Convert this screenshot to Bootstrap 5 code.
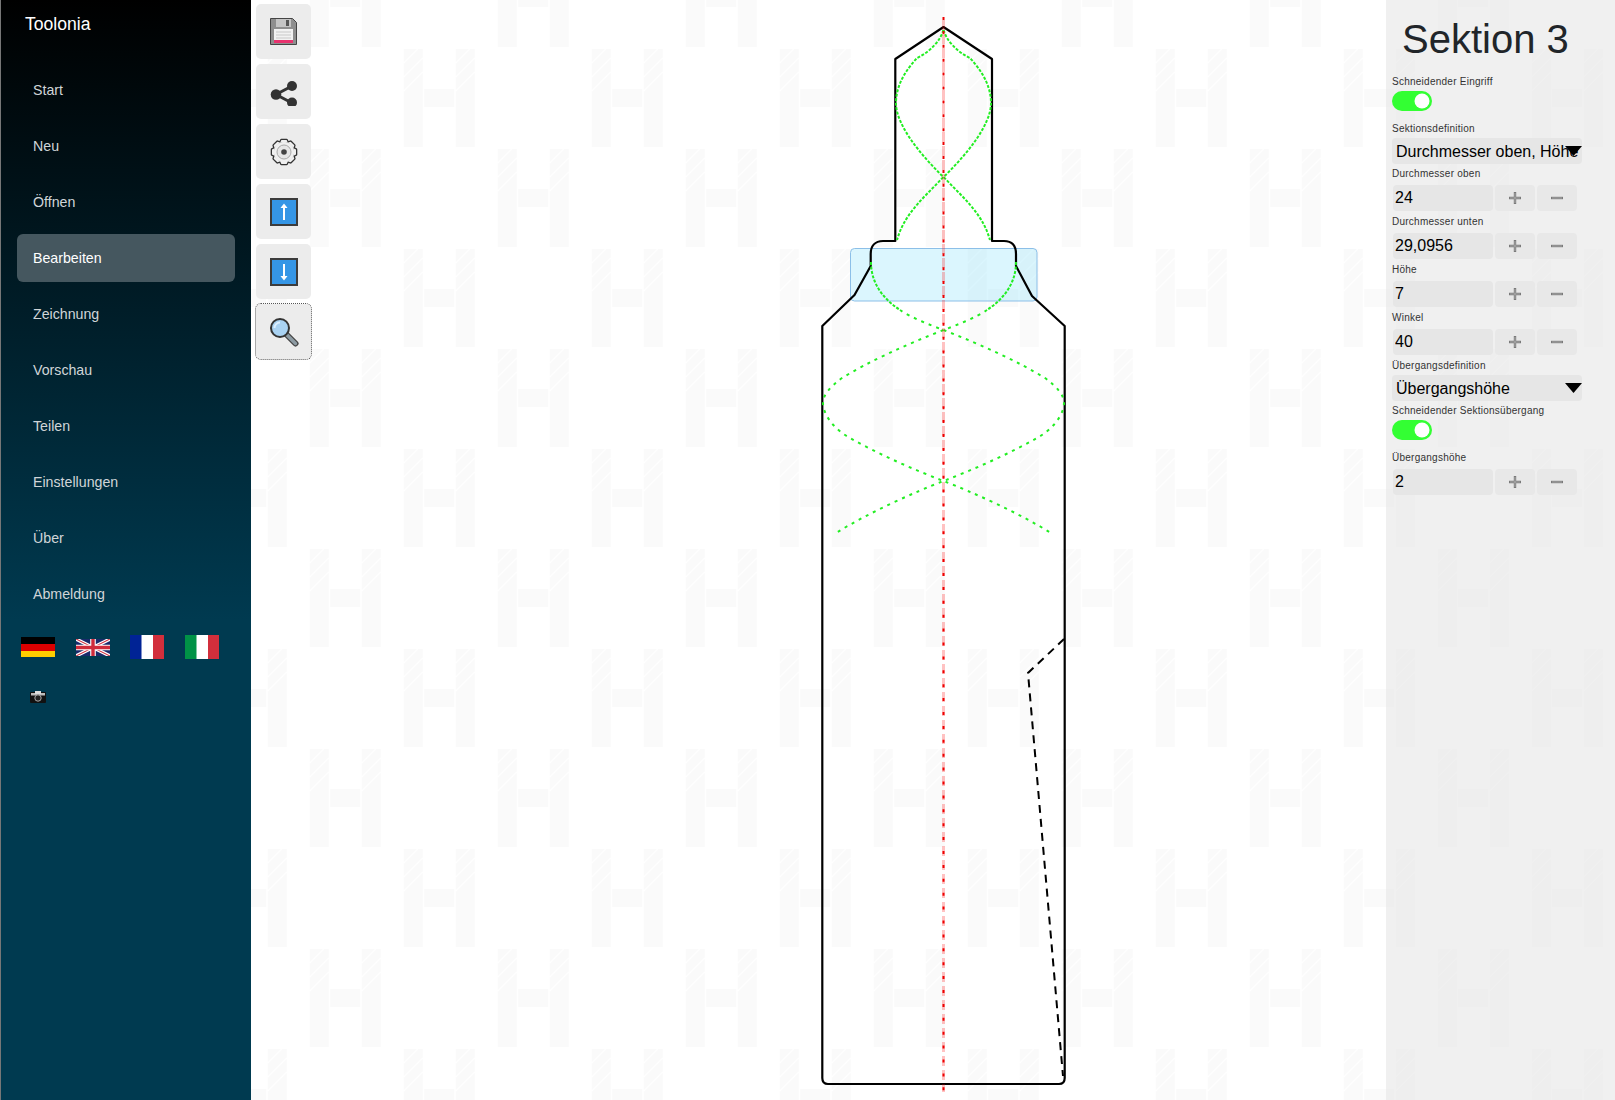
<!DOCTYPE html>
<html lang="de">
<head>
  <meta charset="UTF-8">
  <title>Toolonia</title>
  <meta name="viewport" content="width=device-width, initial-scale=1">
  <link href="https://cdn.jsdelivr.net/npm/bootstrap@5.3.2/dist/css/bootstrap.min.css" rel="stylesheet">
  <style>
    body {
      font-family: "Liberation Sans", Arial, sans-serif;
      height: 1100px;
      overflow: hidden;
      background-color: #fff;
      background-image: url("data:image/svg+xml,%3Csvg xmlns='http://www.w3.org/2000/svg' width='188' height='200'%3E%3Cdefs%3E%3Cg id='h'%3E%3Cpath fill='%23fafafa' d='M0 0h19v98H0zM52 0h19v98H52zM20.500 40h30v18h-30z'/%3E%3Cpath stroke='%23fff' stroke-width='1.500' d='M0 14 14 0M0 28 19 9M0 42 19 23M52 14 66 0M52 28 71 9M52 42 71 23'/%3E%3C/g%3E%3C/defs%3E%3Cuse href='%23h' x='27.700' y='49'/%3E%3Cuse href='%23h' x='121.700' y='149'/%3E%3Cuse href='%23h' x='121.700' y='-51'/%3E%3Cuse href='%23h' x='-66.300' y='149'/%3E%3Cuse href='%23h' x='-66.300' y='-51'/%3E%3C/svg%3E");
    }
    .side-bar {
      width: 251px;
      height: 1100px;
      border-left: 1px solid #777;
      background: linear-gradient(#000 0, #003a50 620px);
    }
    .brand-name { color: #fff; font-size: 17.600px; line-height: 20px; padding: 14px 0 32px 24px; }
    .side-nav { margin: 0 16px; gap: 8px; }
    .side-nav .nav-link {
      height: 48px;
      padding: 14px 16px;
      font-size: 14.200px;
      line-height: 20px;
      color: #d0d5d8;
    }
    .side-nav .nav-link.active { background: #45575f; color: #fff; }
    .flag-row { margin: 17px 0 0 20px; height: 24px; gap: 20.500px; }
    .cam-row { margin: 32px 0 0 29px; height: 14px; }
    .tool-col { width: 66px; padding: 4px 0 0 5px; gap: 5px; }
    .tool-btn { width: 55px; height: 55px; padding: 0; background: #ececec; border: 0; border-radius: 5px; }
    .tool-btn.focused { outline: 1px dotted #555; outline-offset: 0; }
    .draw-area { width: 1069px; height: 1100px; }
    .edit-panel { width: 229px; height: 1100px; padding: 0 0 0 6px; background: rgba(225, 225, 225, .5); }
    .panel-title { font-size: 40px; line-height: 46px; font-weight: 400; color: #212529; margin: 0 0 0 10px; padding-top: 16px; height: 76px; }
    .fld-label { display: block; font-size: 10px; line-height: 12px; letter-spacing: .25px; color: #333; margin: 0; }
    .gap-sm { margin-bottom: 3px; }
    .gap-md { margin-bottom: 5px; }
    .top-xs { margin-top: 4px; }
    .top-sm { margin-top: 5px; }
    .top-lg { margin-top: 12px; }
    .sw-box { padding: 0; margin: 0; min-height: 20px; height: 20px; }
    .sw-box .form-check-input {
      width: 40px;
      height: 20px;
      margin: 0;
      float: none;
      display: block;
      border: 0;
      background-color: #33ff33;
    }
    .sel-box {
      width: 190px;
      height: 26px;
      padding: 2px 0 0 4px;
      border: 0;
      border-radius: 4px;
      font-size: 16px;
      line-height: 24px;
      color: #000;
      background-color: #e6e6e6;
      background-image: url("data:image/svg+xml,%3Csvg xmlns='http://www.w3.org/2000/svg' width='17' height='10'%3E%3Cpath d='M0 0h17L8.500 10z'/%3E%3C/svg%3E");
      background-repeat: no-repeat;
      background-position: right 0 center;
      background-size: 17px 10px;
    }
    .num-row { gap: 2px; padding-left: 1px; }
    .num-input {
      width: 100px;
      height: 26px;
      padding: 0 2px;
      border: 0;
      border-radius: 4px;
      font-size: 16px;
      color: #000;
      background: #e6e6e6;
    }
    .step-btn { width: 40px; height: 26px; padding: 0; border: 0; border-radius: 4px; background: #e8e8e8; }
    .step-btn svg, .tool-btn svg { display: block; margin: auto; }
  </style>
</head>
<body class="d-flex m-0">
  <svg width="0" height="0" class="position-absolute">
    <symbol id="icoPlus" viewBox="0 0 14 14"><path d="M7 1v12M1 7h12" fill="none" stroke="#7a7a7a" stroke-width="2.400"/><path d="M7 2v10M2 7h10" fill="none" stroke="#b5b5b5" stroke-width=".8"/></symbol>
    <symbol id="icoMinus" viewBox="0 0 14 14"><path d="M1 7h12" fill="none" stroke="#7a7a7a" stroke-width="2.400"/><path d="M2 7h10" fill="none" stroke="#b5b5b5" stroke-width=".8"/></symbol>
    <defs>
      <path id="gearTooth" d="M-3.800-9.500-2.600-12H2.600L3.800-9.500Z"/>
      <g id="gearBody">
        <circle r="10.300"/>
        <use href="#gearTooth"/>
        <use href="#gearTooth" transform="rotate(45)"/>
        <use href="#gearTooth" transform="rotate(90)"/>
        <use href="#gearTooth" transform="rotate(135)"/>
        <use href="#gearTooth" transform="rotate(180)"/>
        <use href="#gearTooth" transform="rotate(225)"/>
        <use href="#gearTooth" transform="rotate(270)"/>
        <use href="#gearTooth" transform="rotate(315)"/>
      </g>
    </defs>
  </svg>

  <aside class="side-bar flex-shrink-0">
    <div class="brand-name">Toolonia</div>
    <nav class="nav nav-pills flex-column side-nav">
      <a class="nav-link" href="#">Start</a>
      <a class="nav-link" href="#">Neu</a>
      <a class="nav-link" href="#">Öffnen</a>
      <a class="nav-link active" href="#">Bearbeiten</a>
      <a class="nav-link" href="#">Zeichnung</a>
      <a class="nav-link" href="#">Vorschau</a>
      <a class="nav-link" href="#">Teilen</a>
      <a class="nav-link" href="#">Einstellungen</a>
      <a class="nav-link" href="#">Über</a>
      <a class="nav-link" href="#">Abmeldung</a>
    </nav>
    <div class="d-flex align-items-center flag-row">
      <svg width="34" height="20" viewBox="0 0 34 20"><rect width="34" height="7" fill="#000"/><rect y="7" width="34" height="7" fill="#dd0000"/><rect y="14" width="34" height="6" fill="#ffce00"/></svg>
      <svg width="34" height="17" viewBox="0 0 34 17"><rect width="34" height="17" fill="#1b2a6b"/><path d="M0 0l34 17M34 0L0 17" stroke="#fff" stroke-width="3.400"/><path d="M0 0l34 17M34 0L0 17" stroke="#cf2b3c" stroke-width="1.100"/><path d="M17 0v17M0 8.500h34" stroke="#fff" stroke-width="5.600"/><path d="M17 0v17M0 8.500h34" stroke="#cf2b3c" stroke-width="3.400"/></svg>
      <svg width="34" height="24" viewBox="0 0 34 24"><rect width="34" height="24" fill="#fff"/><rect width="11.500" height="24" fill="#002395"/><rect x="23" width="11" height="24" fill="#d22f3c"/></svg>
      <svg width="34" height="24" viewBox="0 0 34 24"><rect width="34" height="24" fill="#fff"/><rect width="11.500" height="24" fill="#009246"/><rect x="23" width="11" height="24" fill="#d22f3c"/></svg>
    </div>
    <div class="cam-row">
      <svg width="16" height="12" viewBox="0 0 16 12" class="d-block"><rect y="1" width="16" height="11" rx="1" fill="#111"/><rect x="1" y="2" width="14" height="2.500" fill="#bbb"/><rect x="5" width="6" height="3" fill="#ddd"/><circle cx="8" cy="7" r="3.200" fill="#222" stroke="#aaa"/></svg>
    </div>
  </aside>

  <div class="d-flex flex-column flex-shrink-0 tool-col">
    <button class="tool-btn" type="button" aria-label="Speichern">
      <svg width="27" height="27" viewBox="0 0 27 27"><path d="M.5.500h22l4 4v22H.5z" fill="#8e8e8e" stroke="#444"/><rect x="6" y="1" width="15" height="8" fill="#c4c4c4"/><rect x="16" y="2" width="3" height="6" fill="#555"/><rect x="4" y="11" width="19" height="11" fill="#f2f2f2"/><path d="M6 14h15M6 17h15M6 20h15" stroke="#c8c8c8"/><rect x="4" y="22" width="19" height="3" fill="#e8326e"/></svg>
    </button>
    <button class="tool-btn" type="button" aria-label="Teilen">
      <svg width="28" height="28" viewBox="0 -2.500 28 28"><path d="M22 5.500 6 14l16 8.500" fill="none" stroke="#333" stroke-width="3"/><circle cx="22" cy="5.500" r="5" fill="#333"/><circle cx="6" cy="14" r="5.300" fill="#333"/><circle cx="22" cy="22" r="5" fill="#333"/></svg>
    </button>
    <button class="tool-btn" type="button" aria-label="Einstellungen">
      <svg width="28" height="28" viewBox="-14 -14 28 28">
        <use href="#gearBody" fill="#333" stroke="#333" stroke-width="2.600" stroke-linejoin="round"/>
        <use href="#gearBody" fill="#efefef"/>
        <circle r="7" fill="#e6e6e6" stroke="#aaa"/><circle r="2.800" fill="#444"/>
      </svg>
    </button>
    <button class="tool-btn" type="button" aria-label="Nach oben">
      <svg width="28" height="28" viewBox="0 0 28 28"><rect x="1" y="1" width="26" height="26" fill="#3596e6" stroke="#3c3c3c" stroke-width="2"/><path d="M14 22V7" stroke="#fff" stroke-width="2"/><path d="M10.500 10 14 5.500 17.500 10z" fill="#fff"/></svg>
    </button>
    <button class="tool-btn" type="button" aria-label="Nach unten">
      <svg width="28" height="28" viewBox="0 0 28 28"><rect x="1" y="1" width="26" height="26" fill="#3596e6" stroke="#3c3c3c" stroke-width="2"/><path d="M14 6v15" stroke="#fff" stroke-width="2"/><path d="M10.500 18 14 22.500 17.500 18z" fill="#fff"/></svg>
    </button>
    <button class="tool-btn focused" type="button" aria-label="Suchen">
      <svg width="30" height="30" viewBox="0 0 30 30"><path d="M18 18l8.500 8.500" stroke="#444" stroke-width="6" stroke-linecap="round"/><path d="M18 18l8.500 8.500" stroke="#8d9ba3" stroke-width="3.400" stroke-linecap="round"/><circle cx="11" cy="11" r="9" fill="#a9d2f2" stroke="#333" stroke-width="2"/><path d="M5.500 11A5.500 5.500 0 0 1 11 5.500" fill="none" stroke="#dcefff" stroke-width="2"/></svg>
    </button>
  </div>

  <svg class="draw-area flex-shrink-0" viewBox="317 0 1069 1100">
    <!-- markierte Sektion -->
    <rect x="850.500" y="248.500" width="186.500" height="52.500" rx="4" fill="#8fe3fb" fill-opacity=".32" stroke="#8cbfe8"/>
    <!-- Kontur -->
    <path d="M943.500 27 992 59V241H1004C1012 241 1016 246 1016 254V266L1032 296 1064.700 326V1078Q1064.700 1084 1059 1084H828Q822.300 1084 822.300 1078V326L854.500 295 870.700 266V254C870.700 246 875 241 883 241H895.300V59Z" fill="none" stroke="#000" stroke-width="2.200" stroke-linejoin="round"/>
    <path d="M1064 639 1028 673 1063 1076" fill="none" stroke="#000" stroke-width="2" stroke-dasharray="8 6"/>
    <!-- Schneiden -->
    <g fill="none" stroke="#22ee22" stroke-width="2">
      <g stroke-dasharray="3 1.500">
        <path d="M943.300 30C941 40 930 52 917 58 906 70 896 85 896 103 896 125 920 154 943.300 177 925 197 905 212 897 240"/>
        <path d="M943.700 30C946 40 957 52 970 58 981 70 991 85 991 103 991 125 967 154 943.700 177 962 197 982 212 990 240"/>
        <path d="M871 262C871 285 885 300 900 310"/>
        <path d="M1016 262C1016 285 1002 300 987 310"/>
      </g>
      <g stroke-dasharray="3 5">
        <path d="M900 310C912 318 930 325 943.500 330 905 345 868 362 842 378 830 387 823 395 823 403 823 415 835 430 850 438 880 455 915 470 943.500 481 915 492 868 513 836 533"/>
        <path d="M987 310C975 318 957 325 943.500 330 982 345 1019 362 1045 378 1057 387 1064 395 1064 403 1064 415 1052 430 1037 438 1007 455 972 470 943.500 481 972 492 1019 513 1051 533"/>
      </g>
    </g>
    <!-- Achse -->
    <line x1="943.500" y1="17" x2="943.500" y2="1092" stroke="#ff0000" stroke-opacity=".24" stroke-width="3" stroke-dasharray="10 4" stroke-dashoffset="-3"/>
    <line x1="943.500" y1="17" x2="943.500" y2="1092" stroke="#ee0000" stroke-width="2" stroke-dasharray="3 10.900"/>
  </svg>

  <aside class="edit-panel flex-shrink-0">
    <h1 class="panel-title">Sektion 3</h1>

    <label class="fld-label gap-sm">Schneidender Eingriff</label>
    <div class="form-check form-switch sw-box"><input class="form-check-input" type="checkbox" role="switch" checked></div>

    <label class="fld-label gap-sm top-lg">Sektionsdefinition</label>
    <select class="form-select sel-box"><option>Durchmesser oben, Höhe</option></select>

    <label class="fld-label gap-md top-xs">Durchmesser oben</label>
    <div class="d-flex num-row">
      <input class="form-control num-input" value="24">
      <button class="btn step-btn" type="button" aria-label="Plus"><svg width="14" height="14"><use href="#icoPlus"/></svg></button>
      <button class="btn step-btn" type="button" aria-label="Minus"><svg width="14" height="14"><use href="#icoMinus"/></svg></button>
    </div>

    <label class="fld-label gap-md top-sm">Durchmesser unten</label>
    <div class="d-flex num-row">
      <input class="form-control num-input" value="29,0956">
      <button class="btn step-btn" type="button" aria-label="Plus"><svg width="14" height="14"><use href="#icoPlus"/></svg></button>
      <button class="btn step-btn" type="button" aria-label="Minus"><svg width="14" height="14"><use href="#icoMinus"/></svg></button>
    </div>

    <label class="fld-label gap-md top-sm">Höhe</label>
    <div class="d-flex num-row">
      <input class="form-control num-input" value="7">
      <button class="btn step-btn" type="button" aria-label="Plus"><svg width="14" height="14"><use href="#icoPlus"/></svg></button>
      <button class="btn step-btn" type="button" aria-label="Minus"><svg width="14" height="14"><use href="#icoMinus"/></svg></button>
    </div>

    <label class="fld-label gap-md top-sm">Winkel</label>
    <div class="d-flex num-row">
      <input class="form-control num-input" value="40">
      <button class="btn step-btn" type="button" aria-label="Plus"><svg width="14" height="14"><use href="#icoPlus"/></svg></button>
      <button class="btn step-btn" type="button" aria-label="Minus"><svg width="14" height="14"><use href="#icoMinus"/></svg></button>
    </div>

    <label class="fld-label gap-sm top-sm">Übergangsdefinition</label>
    <select class="form-select sel-box"><option>Übergangshöhe</option></select>

    <label class="fld-label gap-sm top-xs">Schneidender Sektionsübergang</label>
    <div class="form-check form-switch sw-box"><input class="form-check-input" type="checkbox" role="switch" checked></div>

    <label class="fld-label gap-md top-lg">Übergangshöhe</label>
    <div class="d-flex num-row">
      <input class="form-control num-input" value="2">
      <button class="btn step-btn" type="button" aria-label="Plus"><svg width="14" height="14"><use href="#icoPlus"/></svg></button>
      <button class="btn step-btn" type="button" aria-label="Minus"><svg width="14" height="14"><use href="#icoMinus"/></svg></button>
    </div>
  </aside>

  <script src="https://cdn.jsdelivr.net/npm/bootstrap@5.3.2/dist/js/bootstrap.bundle.min.js"></script>
</body>
</html>
